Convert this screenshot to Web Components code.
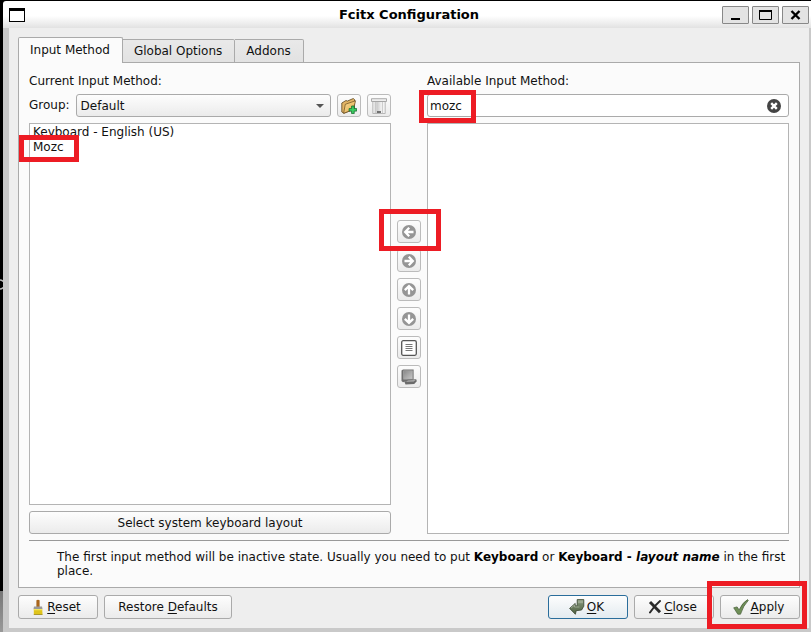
<!DOCTYPE html>
<html lang="en">
<head>
<meta charset="utf-8">
<title>Fcitx Configuration</title>
<style>
    html, body{
        margin: 0;
        height: 100%;
    }

    body{
        font: 12px/15px "DejaVu Sans", sans-serif;
        color: #111;
        background: #000;
    }

    u{
        text-underline-offset: 2px;
    }
</style>
</head>
<body>
<fcitx-desktop>
    <fcitx-window heading="Fcitx Configuration">
        <fcitx-tabs>
            <fcitx-tab active>Input Method</fcitx-tab>
            <fcitx-tab>Global Options</fcitx-tab>
            <fcitx-tab>Addons</fcitx-tab>
        </fcitx-tabs>
        <input-method-page></input-method-page>
        <dialog-buttons slot="footer"></dialog-buttons>
    </fcitx-window>
</fcitx-desktop>

<script>
// icons shared by the buttons
const arrow = (turn) => `
    <svg width="16" height="16" viewBox="0 0 16 16">
        <circle cx="8" cy="8" r="7" fill="#959595"/>
        <path transform="rotate(${turn} 8 8)" d="M8.2 3.8L4.2 8l4 4.2M4.5 8h8" fill="none" stroke="#fff" stroke-width="2.3"/>
    </svg>`;

const icons = {
    left: arrow(0),
    right: arrow(180),
    up: arrow(90),
    down: arrow(270),
    about: `
        <svg width="16" height="16" viewBox="0 0 16 16">
            <rect x=".7" y=".7" width="14.6" height="14.6" rx="1.5" fill="#fff" stroke="#555" stroke-width="1.3"/>
            <path d="M4.5 4.5h7M4.5 6.5h7M4.5 8.5h7M4.5 10.5h7" stroke="#777" stroke-width="1"/>
        </svg>`,
    keyboard: `
        <svg width="16" height="16" viewBox="0 0 16 16">
            <defs><linearGradient id="k" x2="1" y2="1"><stop stop-color="#888"/><stop offset="1" stop-color="#c8c8c8"/></linearGradient></defs>
            <path d="M.5 1.5L2 .5h10.6v10L2 13.2.5 12z" fill="#6e6e6e"/>
            <path d="M2.5 1.7h9v8.5h-9z" fill="url(#k)" stroke="#aaa" stroke-width=".6"/>
            <path d="M3.5 13l3-2.3 8.7-.5.6 2-2.6 2.8-8.7.6z" fill="#6a6a6a"/>
            <path d="M4.8 12.7l2.2-1.3 7.6-.4-1.8 1.5z" fill="#b0b0b0"/>
        </svg>`,
    folder: `
        <svg width="16" height="16" viewBox="0 0 16 16">
            <defs><linearGradient id="f" x2="1" y2="1"><stop stop-color="#fbdc91"/><stop offset="1" stop-color="#e0aa50"/></linearGradient></defs>
            <path d="M.8 5L5 2.5l1.3.6L12.3.5l1.2 1V11L3 15.3.8 14z" fill="#e3b565" stroke="#5b451f" stroke-width=".8"/>
            <path d="M4.3 6.3L14.6 2.7 12.4 11.5 2.6 15.3z" fill="url(#f)" stroke="#65491c" stroke-width=".7"/>
            <path d="M10.6 8h2.6v2.6h2.5v2.5h-2.5v2.5h-2.6v-2.5H8.1v-2.5h2.5z" fill="#3bd063" stroke="#13692b" stroke-width=".8"/>
        </svg>`,
    trash: `
        <svg width="16" height="16" viewBox="0 0 16 16">
            <defs><linearGradient id="t"><stop stop-color="#f5f5f5"/><stop offset=".35" stop-color="#ccc"/><stop offset=".65" stop-color="#eee"/><stop offset="1" stop-color="#f5f5f5"/></linearGradient></defs>
            <path d="M1.8 3.5h12.4v12H1.8z" fill="url(#t)" stroke="#aaa" stroke-width=".8"/>
            <path d="M.5.7h15v2.8H.5z" fill="#eee" stroke="#999" stroke-width=".8"/>
            <path d="M4.5 4v11M11.5 4v11" stroke="#c4c4c4" stroke-width=".8"/>
            <path d="M6 13.3h4v1.4H6z" fill="#444"/>
        </svg>`,
    brush: `
        <svg width="13" height="16" viewBox="-1 0 13 16">
            <path d="M3.4 8V1.3Q5 0 6.6 1.3V8z" fill="#a9651c"/>
            <path d="M1 7.5h8l.5 2.5H.5z" fill="#999"/>
            <path d="M.8 10h8.4l.3 5.5H.8z" fill="#dfc41b"/>
            <path d="M.8 10h8.4v1.3H.8z" fill="#f2e45c"/>
            <path d="M.8 15.5h8.7" stroke="#9c8717" stroke-width=".8"/>
        </svg>`,
    enter: `
        <svg width="16" height="16" viewBox="0 0 16 16">
            <defs><linearGradient id="e" x2="0" y2="1"><stop stop-color="#84957a"/><stop offset="1" stop-color="#4f6242"/></linearGradient></defs>
            <path d="M8.2.6h6.6v6.6L12.6 11l-5.4.7-.8 3.6L.6 9.4l5.6-5V7l2-.3z" fill="url(#e)" stroke="#37452f" stroke-width=".8"/>
            <path d="M9 1.4h5v2.8H9z" fill="#9aa88f"/>
            <path d="M2 9l3.5-2.9V8h5" fill="none" stroke="#a5b19b" stroke-width=".8"/>
        </svg>`,
    cross: `
        <svg width="14" height="14" viewBox="0 0 14 14">
            <path d="M2 2l10 10.3" stroke="#2a2a2a" stroke-width="3"/>
            <path d="M12 1Q7 5 2 12.5" fill="none" stroke="#2a2a2a" stroke-width="2" stroke-linecap="round"/>
        </svg>`,
    check: `
        <svg width="16" height="16" viewBox="0 0 16 16">
            <path d="M.7 8.8l3.4-.9 2 3Q9.5 3.5 14.6.6l.7.8Q10.3 6.5 7.5 15.2H4.8z" fill="#6f8f58" stroke="#465c38" stroke-width=".7"/>
        </svg>`,
    minimize: `<svg width="27" height="18"><path d="M9 13h9" stroke="#000" stroke-width="2"/></svg>`,
    maximize: `<svg width="27" height="18"><path d="M7.5 5v8.5h12V5" fill="none" stroke="#000"/><path d="M7 5h13" stroke="#000" stroke-width="2"/></svg>`,
    close: `<svg width="27" height="18"><path d="M9.5 5l8 8M17.5 5l-8 8" stroke="#000" stroke-width="2.4"/></svg>`,
    clear: `
        <svg width="14" height="14" viewBox="0 0 14 14">
            <circle cx="7" cy="7" r="7" fill="#444"/>
            <path d="M4.2 4.2l5.6 5.6M9.8 4.2L4.2 9.8" stroke="#fff" stroke-width="2.4"/>
        </svg>`
};

// black desktop behind the window
class FcitxDesktop extends HTMLElement{
    constructor(){
        super();
        this.attachShadow({mode: 'open'});
        this.shadowRoot.innerHTML=`
            <style>
                :host{
                    display: flex;
                    box-sizing: border-box;
                    min-height: 100vh;
                    padding: 1px 0 0 3px;
                    background: linear-gradient(#777, #999) left bottom / 3px 41px no-repeat #000;
                }

                .terminal{
                    position: absolute;
                    left: 0;
                    top: 279px;
                }

                ::slotted(fcitx-window){
                    flex: 1;
                }
            </style>
            <svg class="terminal" width="3" height="11"><path d="M0 1Q2 1 3 2.5M0 10Q2 10 3 8.5" fill="none" stroke="#bbb" stroke-width="1.5"/></svg>
            <slot></slot>
        `
    }
}

class FcitxWindow extends HTMLElement{
    constructor(){
        super();
        this.attachShadow({mode: 'open'});
        this.shadowRoot.innerHTML=`
            <style>
                :host{
                    display: flex;
                    flex-direction: column;
                    min-width: 0;
                }

                header{
                    display: flex;
                    align-items: center;
                    gap: 3px;
                    height: 27px;
                    padding: 0 2px 0 6px;
                    border-radius: 3px 0 0 0;
                    background: linear-gradient(#fff 55%, #e2e2e2);
                }

                .menu{
                    width: 14px;
                    height: 10px;
                    border: 1px solid #000;
                    border-top-width: 3px;
                    background: #fff;
                }

                h1{
                    flex: 1;
                    margin: 0;
                    padding-left: 71px;
                    font-size: 13px;
                    color: #000;
                    text-align: center;
                }

                header button{
                    display: flex;
                    width: 27px;
                    height: 18px;
                    padding: 0;
                    border: 1px solid #888;
                    border-radius: 1px;
                    background: #e3e3e3;
                }

                header svg{
                    flex: none;
                    margin: -1px;
                }

                main{
                    flex: 1;
                    display: flex;
                    flex-direction: column;
                    padding: 9px;
                    border: solid #c9c9c9;
                    border-width: 0 2px 4px 6px;
                    background: #eee;
                }
            </style>
            <header>
                <span class="menu"></span>
                <h1></h1>
                <button aria-label="Minimize">${icons.minimize}</button>
                <button aria-label="Maximize">${icons.maximize}</button>
                <button aria-label="Close">${icons.close}</button>
            </header>
            <main>
                <slot></slot>
                <slot name="footer"></slot>
            </main>
        `
        this.shadowRoot.querySelector('h1').textContent = this.getAttribute('heading');
    }
}

class FcitxTabs extends HTMLElement{
    constructor(){
        super();
        this.attachShadow({mode: 'open'});
        this.shadowRoot.innerHTML=`
            <style>
                :host{
                    display: flex;
                    align-items: flex-end;
                    height: 26px;
                    position: relative;
                    z-index: 1;
                    margin-bottom: -1px;
                }
            </style>
            <slot></slot>
        `
    }
}

class FcitxTab extends HTMLElement{
    constructor(){
        super();
        this.attachShadow({mode: 'open'});
        this.shadowRoot.innerHTML=`
            <style>
                :host{
                    display: block;
                }

                button{
                    display: block;
                    box-sizing: border-box;
                    height: 24px;
                    padding: 0 12px 0 11px;
                    border: 1px solid #aaa;
                    border-left: 0;
                    border-radius: 0 2px 0 0;
                    background: linear-gradient(#e9e9e9, #e2e2e2);
                    font: inherit;
                    color: inherit;
                }

                :host([active]) button{
                    height: 26px;
                    border-left: 1px solid #aaa;
                    border-bottom: 0;
                    border-radius: 2px 2px 0 0;
                    background: #fbfbfb;
                }
            </style>
            <button><slot></slot></button>
        `
    }
}

// red frame round whatever is passed in, --frame is its inset
class RedFrame extends HTMLElement{
    constructor(){
        super();
        this.attachShadow({mode: 'open'});
        this.shadowRoot.innerHTML=`
            <style>
                :host{
                    display: block;
                    position: relative;
                }

                .frame{
                    position: absolute;
                    inset: var(--frame);
                    z-index: 2;
                    border: 5px solid #ed1c24;
                    pointer-events: none;
                }
            </style>
            <slot></slot>
            <div class="frame"></div>
        `
    }
}

class FcitxButton extends HTMLElement{
    constructor(){
        super();
        this.attachShadow({mode: 'open'});
        const icon = icons[this.getAttribute('icon')] || '';
        const label = this.getAttribute('label');
        this.shadowRoot.innerHTML=`
            <style>
                :host{
                    display: block;
                }

                button{
                    display: flex;
                    align-items: center;
                    justify-content: center;
                    gap: 2px;
                    box-sizing: border-box;
                    width: 100%;
                    height: var(--button-height, 23px);
                    padding: 0;
                    border: 1px solid #aaa;
                    border-radius: 3px;
                    background: linear-gradient(#fdfdfd, #ebebeb);
                    font: inherit;
                    color: inherit;
                    white-space: nowrap;
                }

                :host([tool]) button{
                    width: 24px;
                    border-color: #bbb;
                }

                :host([primary]) button{
                    border-color: #2a6d9b;
                    background: linear-gradient(#fdfdfd, #e3ebf0);
                }

                svg{
                    flex: none;
                }

                :host(:not([tool])) svg{
                    margin-left: -3px;
                }

                span{
                    padding-top: 1px;
                }
            </style>
            <button ${label ? `aria-label="${label}"` : ''}>${icon}<span><slot></slot></span></button>
        `
        if (label) this.shadowRoot.querySelector('span').remove();
    }
}

class InputMethodPage extends HTMLElement{
    constructor(){
        super();
        this.attachShadow({mode: 'open'});
        this.shadowRoot.innerHTML=`
            <style>
                :host{
                    flex: 1;
                    display: flex;
                    flex-direction: column;
                    padding: 11px 10px 9px;
                    border: 1px solid #aaa;
                    background: #fbfbfb;
                }

                .columns{
                    flex: 1;
                    display: flex;
                    gap: 6px;
                }

                .column{
                    flex: 1;
                    display: flex;
                    flex-direction: column;
                    gap: 6px;
                    min-width: 0;
                }

                .caption{
                    line-height: 14px;
                }

                .moves{
                    display: flex;
                    flex-direction: column;
                    justify-content: center;
                    gap: 6px;
                }

                .group{
                    display: flex;
                    align-items: center;
                    gap: 6px;
                }

                .select{
                    flex: 1;
                    display: grid;
                    align-items: center;
                }

                .select > *{
                    grid-area: 1 / 1;
                }

                .select svg{
                    justify-self: end;
                    margin-right: 7px;
                    pointer-events: none;
                }

                select, input{
                    box-sizing: border-box;
                    width: 100%;
                    height: 23px;
                    margin: 0;
                    border: 1px solid #aaa;
                    border-radius: 3px;
                    font: inherit;
                    color: inherit;
                }

                select{
                    appearance: none;
                    padding: 1px 4px 0;
                    background: linear-gradient(#fdfdfd, #ebebeb);
                }

                input{
                    padding: 0 30px 0 2px;
                    background: #fff;
                }

                .search{
                    display: grid;
                    align-items: center;
                }

                .search > *{
                    grid-area: 1 / 1;
                }

                .search button{
                    display: flex;
                    justify-self: end;
                    margin: 0 8px 0 0;
                    padding: 0;
                    border: 0;
                    background: none;
                }

                ul{
                    flex: 1;
                    margin: 0;
                    padding: 1px 3px 0;
                    border: 1px solid #b4b4b4;
                    background: #fff;
                    list-style: none;
                }

                li red-frame{
                    width: max-content;
                }

                .hint{
                    margin: 6px 0 0;
                    padding: 9px 0 0 28px;
                    border-top: 1px solid #999;
                    line-height: 14px;
                }

                b{
                    color: #000;
                }
            </style>
            <div class="columns">
                <div class="column">
                    <span class="caption">Current Input Method:</span>
                    <div class="group">
                        <label for="group">Group:</label>
                        <div class="select">
                            <select id="group"><option>Default</option></select>
                            <svg width="8" height="4"><path d="M0 0h8L4 4z" fill="#555"/></svg>
                        </div>
                        <fcitx-button tool icon="folder" label="Add group"></fcitx-button>
                        <fcitx-button tool icon="trash" label="Delete group"></fcitx-button>
                    </div>
                    <ul>
                        <li>Keyboard - English (US)</li>
                        <li><red-frame style="--frame: -5px -15px -7px -14px">Mozc</red-frame></li>
                    </ul>
                    <fcitx-button>Select system keyboard layout</fcitx-button>
                </div>
                <div class="moves">
                    <red-frame style="--frame: -11px -20px -8px -18px">
                        <fcitx-button tool icon="left" label="Add"></fcitx-button>
                    </red-frame>
                    <fcitx-button tool icon="right" label="Remove"></fcitx-button>
                    <fcitx-button tool icon="up" label="Move up"></fcitx-button>
                    <fcitx-button tool icon="down" label="Move down"></fcitx-button>
                    <fcitx-button tool icon="about" label="Configure"></fcitx-button>
                    <fcitx-button tool icon="keyboard" label="Keyboard layout"></fcitx-button>
                </div>
                <div class="column">
                    <label class="caption" for="search">Available Input Method:</label>
                    <red-frame style="--frame: -4px calc(100% - 49px) -6px -8px">
                        <div class="search">
                            <input id="search" type="text" value="mozc">
                            <button aria-label="Clear">${icons.clear}</button>
                        </div>
                    </red-frame>
                    <ul></ul>
                </div>
            </div>
            <p class="hint">The first input method will be inactive state. Usually you need to put <b>Keyboard</b> or <b>Keyboard - <i>layout name</i></b> in the first place.</p>
        `
    }
}

class DialogButtons extends HTMLElement{
    constructor(){
        super();
        this.attachShadow({mode: 'open'});
        this.shadowRoot.innerHTML=`
            <style>
                :host{
                    --button-height: 24px;
                    display: flex;
                    gap: 6px;
                    padding-top: 7px;
                }

                fcitx-button{
                    width: 80px;
                }

                .wide{
                    width: 128px;
                }

                .space{
                    flex: 1;
                }

                u{
                    text-underline-offset: 2px;
                }
            </style>
            <fcitx-button icon="brush"><u>R</u>eset</fcitx-button>
            <fcitx-button class="wide">Restore <u>D</u>efaults</fcitx-button>
            <span class="space"></span>
            <fcitx-button primary icon="enter"><u>O</u>K</fcitx-button>
            <fcitx-button icon="cross"><u>C</u>lose</fcitx-button>
            <red-frame style="--frame: -14px -7px -10px -13px">
                <fcitx-button icon="check"><u>A</u>pply</fcitx-button>
            </red-frame>
        `
    }
}

customElements.define('fcitx-desktop', FcitxDesktop);
customElements.define('fcitx-window', FcitxWindow);
customElements.define('fcitx-tabs', FcitxTabs);
customElements.define('fcitx-tab', FcitxTab);
customElements.define('red-frame', RedFrame);
customElements.define('fcitx-button', FcitxButton);
customElements.define('input-method-page', InputMethodPage);
customElements.define('dialog-buttons', DialogButtons);
</script>
</body>
</html>
